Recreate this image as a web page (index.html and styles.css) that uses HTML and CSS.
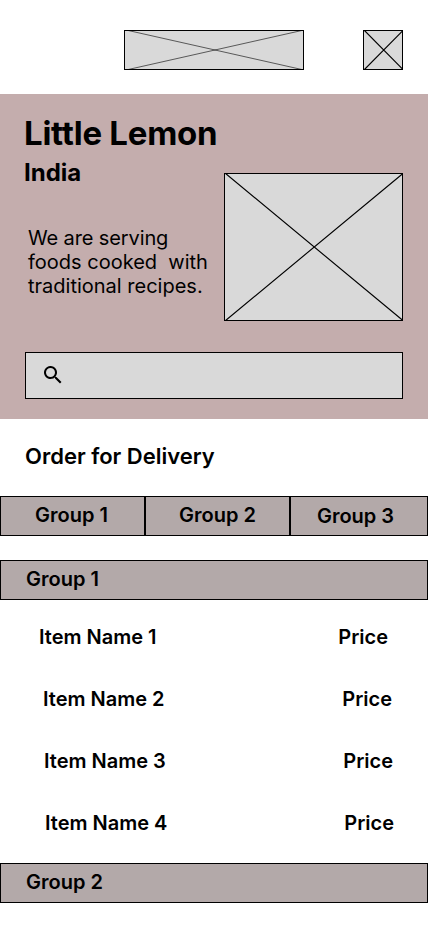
FILE: index.html
```html
<!DOCTYPE html>
<html lang="en">
<head>
<meta charset="utf-8">
<title>Little Lemon</title>
<link rel="stylesheet" href="styles.css">
</head>
<body>
<header class="top">
  <svg class="logo" viewBox="0 0 180 40"><rect class="box" x=".5" y=".5" width="179" height="39"/><path class="thin" d="M2 0L180 40M180 0L2 40"/></svg>
  <svg class="avatar" viewBox="0 0 40 40"><rect class="box" x=".5" y=".5" width="39" height="39"/><path class="line" d="M1 0L40.500 40M40.500 0L1 40"/></svg>
</header>
<section class="hero">
  <h1>Little Lemon</h1>
  <div class="row">
    <div class="copy">
      <h2>India</h2>
      <p><span class="lead">We are serving</span><br>foods cooked&nbsp; with<br>traditional recipes.</p>
    </div>
    <svg class="photo" viewBox="0 0 179 148"><rect class="box" x=".5" y=".5" width="178" height="147"/><path class="line" d="M1 0L179.500 148M179.500 0L1 148"/></svg>
  </div>
  <div class="search"><svg class="glass" viewBox="0 0 18 18"><path d="M12.5 11h-.79l-.28-.27A6.5 6.5 0 1 0 10.730 11.430l.27.28v.79l5 4.990L17.490 16zm-6 0a4.500 4.500 0 1 1 0-9 4.500 4.500 0 0 1 0 9z"/></svg></div>
</section>
<main>
  <h3>Order for Delivery</h3>
  <nav class="tabs"><a>Group 1</a><a>Group 2</a><a>Group 3</a></nav>
  <div class="group">Group 1</div>
  <ul>
    <li><span>Item Name 1</span><span>Price</span></li>
    <li><span>Item Name 2</span><span>Price</span></li>
    <li><span>Item Name 3</span><span>Price</span></li>
    <li><span>Item Name 4</span><span>Price</span></li>
  </ul>
  <div class="group">Group 2</div>
</main>
</body>
</html>
```
FILE: styles.css
```css
* { box-sizing: border-box; }
body { margin: 0; height: 926px; overflow: hidden; background: #fff; color: #000; font: 600 20px/24px Inter, sans-serif; }
svg { display: block; flex: none; }
h1, h2, h3, p, ul { margin: 0; padding: 0; }
.box { fill: #d9d9d9; stroke: #000; }
.line { stroke: #000; stroke-width: 1.15; fill: none; }
.thin { stroke: #000; stroke-width: .6; fill: none; }
.top { height: 94px; padding: 30px 25px 0 124px; display: flex; justify-content: space-between; }
.logo { width: 180px; height: 40px; }
.avatar { width: 40px; height: 40px; }
.hero { height: 325px; padding: 19px 25px 0 24px; background: #c4adad; }
h1 { font-size: 33px; line-height: 40px; font-weight: 700; letter-spacing: -.25px; }
.row { display: flex; justify-content: space-between; height: 199px; }
.copy { padding-top: 5px; white-space: nowrap; }
h2 { font-size: 24px; line-height: 29px; font-weight: 700; }
p { margin: 39px 0 0 4px; font-weight: 400; }
.lead { letter-spacing: -.12px; }
.photo { width: 179px; height: 148px; margin-top: 20px; }
.search { margin-left: 1px; height: 47px; border: 1px solid #000; background: #d9d9d9; padding: 13px 18px; }
.glass { width: 18px; height: 18px; }
h3 { margin: 25px 0 28px 25px; font-size: 22px; line-height: 24px; font-weight: 600; }
.tabs { display: grid; grid-template-columns: 145px 145px 138px; height: 40px; }
.tabs a { border: 1px solid #000; background: #b3a9a9; text-align: center; line-height: 37px; }
.tabs a:first-child { padding-right: 2px; }
.tabs a:last-child { padding: 1px 7px 0 0; }
.group { height: 40px; padding: 0 25px; border: 1px solid #000; background: #b3a9a9; line-height: 37px; }
.tabs + .group { margin-top: 24px; }
ul { list-style: none; padding: 25px 0 28px; display: grid; gap: 38px; }
li { display: flex; justify-content: space-between; padding: 0 40px 0 39px; }
li:nth-child(2) { padding: 0 36px 0 43px; }
li:nth-child(3) { padding: 0 35px 0 44px; }
li:nth-child(4) { padding: 0 34px 0 45px; }
```
